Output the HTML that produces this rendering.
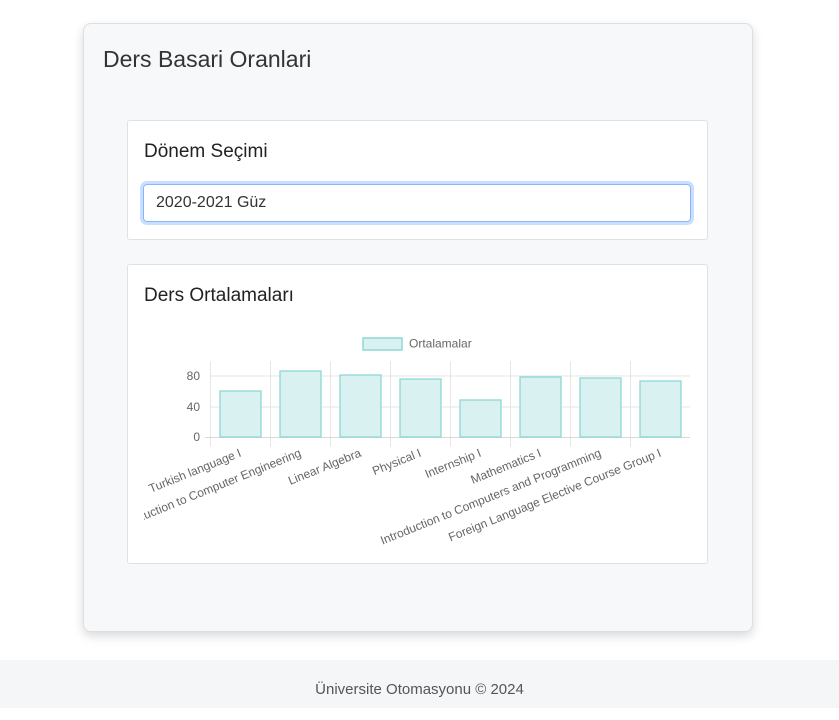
<!DOCTYPE html>
<html><head><meta charset="utf-8"><style>
body{margin:0;width:839px;height:708px;background:#fff;font-family:"Liberation Sans",sans-serif;color:#212529;position:relative;overflow:hidden}
.outer{position:absolute;left:83px;top:23px;width:668px;height:607px;background:#f7f8f9;border:1px solid #dcdfe2;border-radius:8px;box-shadow:0 4px 10px rgba(0,0,0,.15)}
h1{position:absolute;left:19px;top:22px;margin:0;font-size:23px;font-weight:normal;color:#333}
.card{position:absolute;left:43px;width:579px;background:#fff;border:1px solid #dfe2e5;border-radius:3px}
h2{position:absolute;left:16px;margin:0;font-size:19px;font-weight:normal;color:#222}
.inp{position:absolute;left:15px;top:63px;border:1px solid #86b7fe;border-radius:4px;box-shadow:0 0 0 3px rgba(13,110,253,.22);font-size:16px;line-height:36px;padding-left:12px;box-sizing:border-box;width:548px;height:38px;color:#333}
.footer{position:absolute;left:0;top:660px;width:839px;height:48px;background:#f5f6f7;text-align:center;line-height:60px;font-size:15px;color:#555}
</style></head><body>
<div class="outer">
<h1>Ders Basari Oranlari</h1>
<div class="card" style="top:96px;height:118px">
<h2 style="top:20px">Dönem Seçimi</h2>
<div class="inp">2020-2021 Güz</div>
</div>
<div class="card" style="top:240px;height:298px">
<h2 style="top:20px">Ders Ortalamaları</h2>
</div>
</div>
<svg style="position:absolute;left:0;top:0" width="839" height="708" font-family="Liberation Sans, sans-serif">
<defs><clipPath id="c"><rect x="144" y="300" width="560" height="260"/></clipPath></defs>
<rect x="363" y="338" width="39" height="12" fill="#d9f1f1" stroke="#8ed8d6" stroke-width="1.5"/>
<text x="409" y="347.5" font-size="12" fill="#666">Ortalamalar</text>
<g stroke="#e6e6e6" stroke-width="1">
<line x1="210" y1="376" x2="690" y2="376"/><line x1="210" y1="407" x2="690" y2="407"/>
<line x1="210.5" y1="361" x2="210.5" y2="447"/><line x1="270.5" y1="361" x2="270.5" y2="447"/><line x1="330.5" y1="361" x2="330.5" y2="447"/><line x1="390.5" y1="361" x2="390.5" y2="447"/><line x1="450.5" y1="361" x2="450.5" y2="447"/><line x1="510.5" y1="361" x2="510.5" y2="447"/><line x1="570.5" y1="361" x2="570.5" y2="447"/><line x1="630.5" y1="361" x2="630.5" y2="447"/>
</g>
<line x1="205" y1="437.5" x2="690" y2="437.5" stroke="#d8d8d8"/>
<g fill="#d9f1f1" stroke="#8ed8d6" stroke-width="1.3">
<rect x="220" y="391" width="41" height="46"/><rect x="280" y="371" width="41" height="66"/><rect x="340" y="375" width="41" height="62"/><rect x="400" y="379" width="41" height="58"/><rect x="460" y="400" width="41" height="37"/><rect x="520" y="377" width="41" height="60"/><rect x="580" y="378" width="41" height="59"/><rect x="640" y="381" width="41" height="56"/>
</g>
<g font-size="12" fill="#666" text-anchor="end">
<text x="200" y="380">80</text><text x="200" y="411">40</text><text x="200" y="441">0</text>
</g>
<g font-size="12" fill="#666" text-anchor="end" clip-path="url(#c)">
<text transform="translate(242,456) rotate(-22)">Turkish language I</text>
<text transform="translate(302,456) rotate(-22)">Introduction to Computer Engineering</text>
<text transform="translate(362,456) rotate(-22)">Linear Algebra</text>
<text transform="translate(422,456) rotate(-22)">Physical I</text>
<text transform="translate(482,456) rotate(-22)">Internship I</text>
<text transform="translate(542,456) rotate(-22)">Mathematics I</text>
<text transform="translate(602,456) rotate(-22)">Introduction to Computers and Programming</text>
<text transform="translate(662,456) rotate(-22)">Foreign Language Elective Course Group I</text>
</g>
</svg>
<div class="footer">Üniversite Otomasyonu © 2024</div>
</body></html>
